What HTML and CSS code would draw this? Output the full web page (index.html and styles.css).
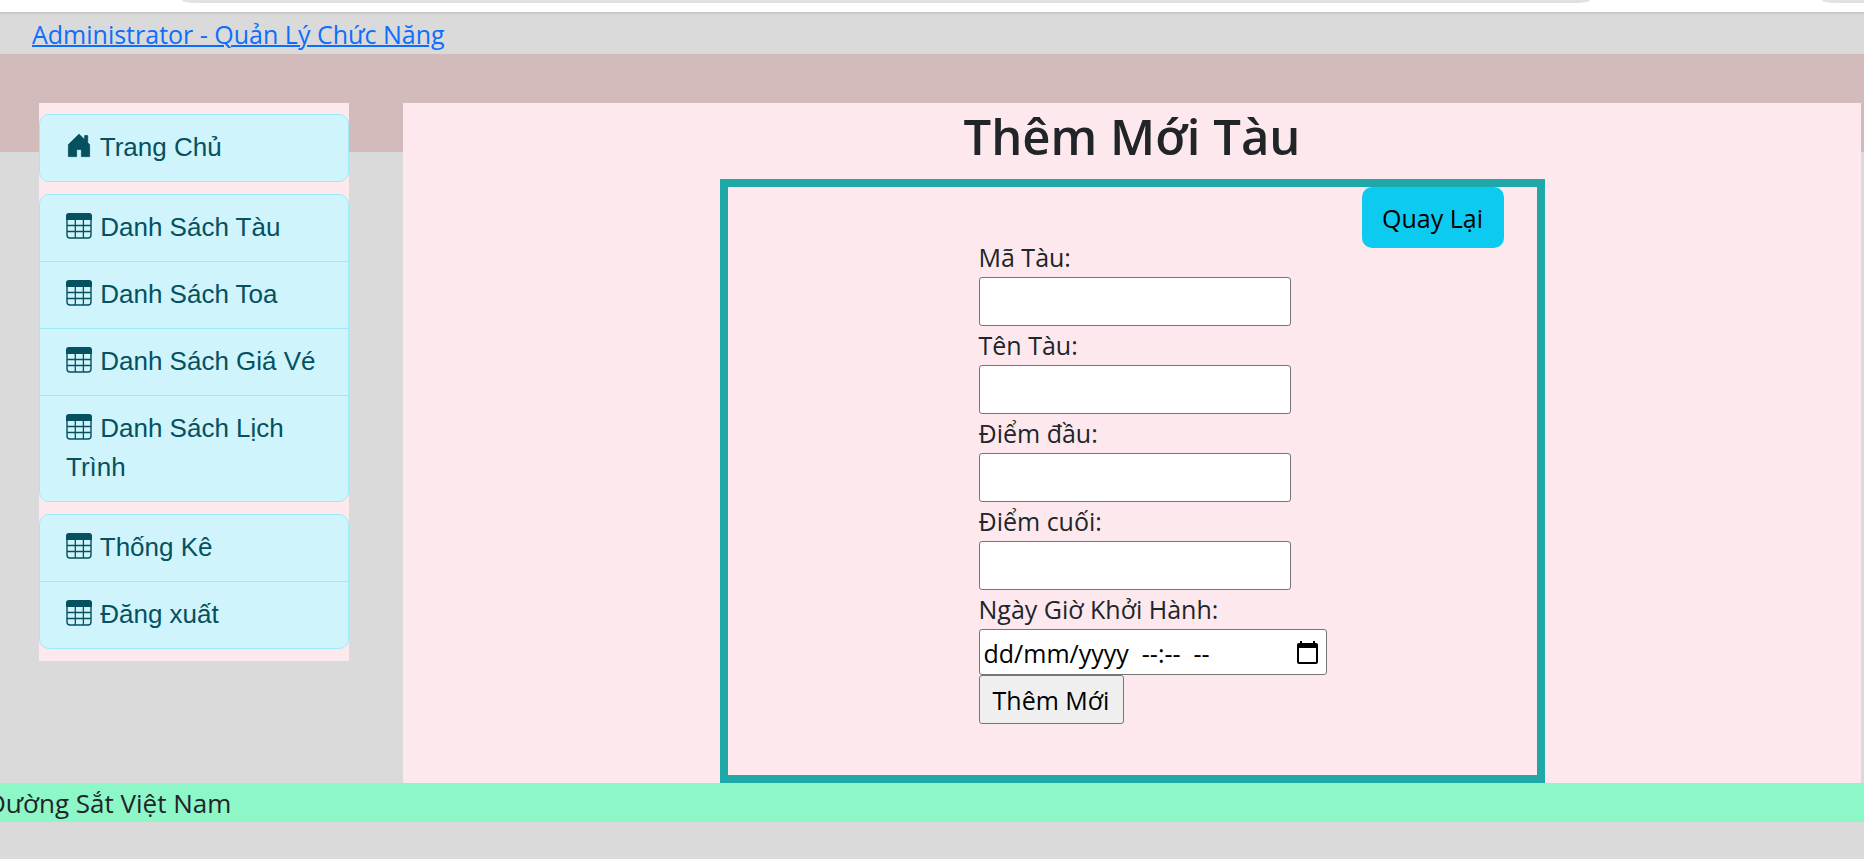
FILE: index.html
```html
<!DOCTYPE html>
<html lang="vi">
<head>
<meta charset="utf-8">
<meta name="viewport" content="width=device-width, initial-scale=1">
<title>Thêm Mới Tàu</title>
<link rel="stylesheet" href="styles.css">
</head>
<body>
<svg class="sprite" aria-hidden="true">
  <symbol id="i-table" viewBox="0 0 26 26">
    <rect x="1" y="1" width="24" height="24" rx="3" fill="none" stroke="currentColor" stroke-width="1.4"/>
    <path d="M0 7V3a3 3 0 0 1 3-3h20a3 3 0 0 1 3 3v4z" fill="currentColor"/>
    <path d="M1 12.5h24M1 18.5h24M9.3 6v19M17.4 6v19" fill="none" stroke="currentColor" stroke-width="1.3"/>
  </symbol>
  <symbol id="i-house" viewBox="0 0 26 26">
    <path d="M13 1.2 2.4 11.6V23.6h8.2v-7.2h4.8v7.2h8.2V11.6l-1.9-1.9V2.6h-3v4.1z" fill="currentColor" stroke="currentColor" stroke-width=".8" stroke-linejoin="round"/>
  </symbol>
</svg>
<div class="chrome"><div class="chrome-bar"></div><div class="chrome-end"></div></div>
<header class="top"><a href="#">Administrator - Quản Lý Chức Năng</a></header>
<div class="layout">
  <nav class="side">
    <div class="group">
      <a href="#"><svg class="icon"><use href="#i-house"/></svg> Trang Chủ</a>
    </div>
    <div class="group">
      <a href="#"><svg class="icon"><use href="#i-table"/></svg> Danh Sách Tàu</a>
      <a href="#"><svg class="icon"><use href="#i-table"/></svg> Danh Sách Toa</a>
      <a href="#"><svg class="icon"><use href="#i-table"/></svg> Danh Sách Giá Vé</a>
      <a href="#"><svg class="icon"><use href="#i-table"/></svg> Danh Sách Lịch Trình</a>
    </div>
    <div class="group">
      <a href="#"><svg class="icon"><use href="#i-table"/></svg> Thống Kê</a>
      <a href="#"><svg class="icon"><use href="#i-table"/></svg> Đăng xuất</a>
    </div>
  </nav>
  <main class="main">
    <h1>Thêm Mới Tàu</h1>
    <section class="card">
      <form class="form">
        <label for="ma">Mã Tàu:</label>
        <input id="ma" type="text">
        <label for="ten">Tên Tàu:</label>
        <input id="ten" type="text">
        <label for="dau">Điểm đầu:</label>
        <input id="dau" type="text">
        <label for="cuoi">Điểm cuối:</label>
        <input id="cuoi" type="text">
        <label for="gio">Ngày Giờ Khởi Hành:</label>
        <div class="datetime">
          <input id="gio" type="text" placeholder="dd/mm/yyyy  --:--  --">
          <button type="button" aria-label="Chọn ngày">
            <svg viewBox="0 0 21 23"><path d="M3 0h2v2h11V0h2v2h1a2 2 0 0 1 2 2v17a2 2 0 0 1-2 2H2a2 2 0 0 1-2-2V4a2 2 0 0 1 2-2h1zM2 7v14h17V7z" fill="currentColor" fill-rule="evenodd"/></svg>
          </button>
        </div>
        <button class="submit" type="submit">Thêm Mới</button>
      </form>
      <a class="back" href="#">Quay Lại</a>
    </section>
  </main>
</div>
<footer class="foot">Đường Sắt Việt Nam</footer>
</body>
</html>
```
FILE: styles.css
```css
* { box-sizing: border-box; }
body {
  margin: 0;
  background: #dadada;
  color: #212529;
  font: 25px/39px "Open Sans", "Noto Sans", sans-serif;
  overflow-x: hidden;
}
.sprite { display: none; }
.chrome {
  display: flex;
  align-items: flex-start;
  gap: 232px;
  height: 14px;
  padding-left: 182px;
  background: #fff;
  border-bottom: 2px solid #c9c9c9;
}
.chrome-bar, .chrome-end { height: 3px; background: #e1e1e1; }
.chrome-bar { flex: 1; border-radius: 0 0 14px 14px / 0 0 3px 3px; }
.chrome-end { width: 42px; border-radius: 0 0 0 14px / 0 0 0 3px; }
.top { height: 40px; padding: 1px 0 0 32px; }
.top a { color: #0d6efd; text-decoration-thickness: 2px; }
.layout {
  display: flex;
  align-items: flex-start;
  gap: 54px;
  padding: 49px 3px 0 39px;
  background: linear-gradient(#d3bbbb 98px, transparent 98px);
}
.side {
  display: flex;
  flex-direction: column;
  gap: 12px;
  flex: 0 0 310px;
  padding: 11px 0 12px;
  background: #fde9ed;
  font-family: "Liberation Sans", Arial, sans-serif;
  font-size: 26px;
}
.group {
  border: 1px solid #9eeaf9;
  border-radius: 10px;
  background: #cff4fc;
  overflow: hidden;
}
.group a {
  display: block;
  padding: 13px 26px 14px;
  color: #055160;
  text-decoration: none;
}
.group a + a { border-top: 1px solid #9eeaf9; }
.icon { width: 26px; height: 26px; margin-right: 1px; vertical-align: -3px; }
.main { flex: 1; background: #fde9ed; }
h1 {
  margin: 0 0 11px;
  padding-top: 2px;
  font-size: 49px;
  line-height: 63px;
  font-weight: 600;
  text-align: center;
}
.card {
  display: flex;
  justify-content: flex-end;
  align-items: flex-start;
  gap: 35px;
  max-width: 825px;
  margin: 0 auto;
  padding-right: 33px;
  border: 8px solid #1fa8a8;
}
.form {
  display: flex;
  flex-direction: column;
  align-items: flex-start;
  width: 348px;
  padding: 51px 0;
}
.form input, .submit {
  height: 49px;
  border: 1px solid #767676;
  border-radius: 3px;
  font: inherit;
}
.form input { width: 312px; padding: 0 4px; background: #fff; color: #000; }
.form input::placeholder { color: #000; opacity: 1; white-space: pre; }
.datetime {
  display: flex;
  align-items: center;
  width: 100%;
  height: 46px;
  padding-right: 8px;
  border: 1px solid #767676;
  border-radius: 3px;
  background: #fff;
}
.form .datetime input { flex: 1; min-width: 0; height: 100%; padding-top: 2px; border: 0; background: none; }
.datetime button { display: flex; padding: 0; border: 0; background: none; color: #000; }
.datetime svg { width: 21px; height: 23px; }
.submit { min-width: 145px; padding: 2px 12px 0; background: #efefef; color: #000; }
.back {
  min-width: 142px;
  padding: 12px 20px 10px;
  border-radius: 10px;
  background: #0dcaf0;
  color: #000;
  text-align: center;
  text-decoration: none;
  white-space: nowrap;
}
.foot {
  padding-top: 2px;
  background: #8df7c8;
  font-size: 26px;
  line-height: 37px;
  text-indent: -13px;
  white-space: nowrap;
  overflow: hidden;
}
```
